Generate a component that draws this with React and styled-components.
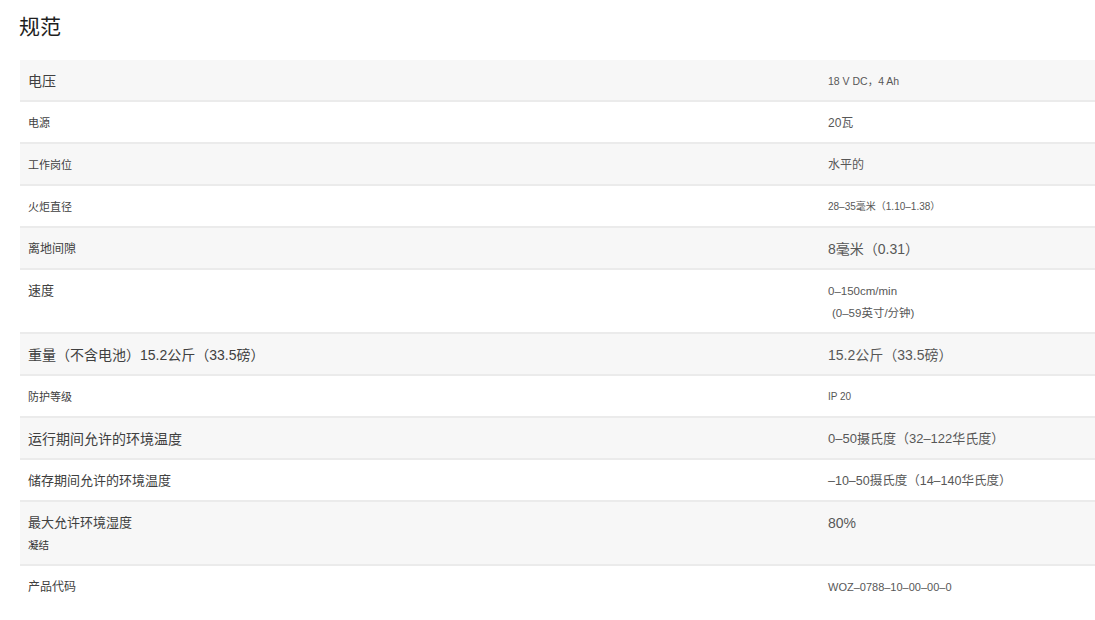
import React from "react";
import styled, { createGlobalStyle } from "styled-components";

const specs = [
  { label: "电压", labelSize: 14, values: ["18 V DC，4 Ah"], valueSize: 10.5 },
  { label: "电源", labelSize: 11, values: ["20瓦"], valueSize: 12 },
  { label: "工作岗位", labelSize: 11, values: ["水平的"], valueSize: 12 },
  { label: "火炬直径", labelSize: 11, values: ["28–35毫米（1.10–1.38）"], valueSize: 10 },
  { label: "离地间隙", labelSize: 12, values: ["8毫米（0.31）"], valueSize: 14 },
  {
    label: "速度",
    labelSize: 13,
    values: ["0–150cm/min", "(0–59英寸/分钟)"],
    valueSize: 11.5,
    tall: true,
  },
  {
    label: "重量（不含电池）15.2公斤（33.5磅）",
    labelSize: 14,
    values: ["15.2公斤（33.5磅）"],
    valueSize: 14,
  },
  { label: "防护等级", labelSize: 11, values: ["IP 20"], valueSize: 10 },
  {
    label: "运行期间允许的环境温度",
    labelSize: 14,
    values: ["0–50摄氏度（32–122华氏度）"],
    valueSize: 13,
  },
  {
    label: "储存期间允许的环境温度",
    labelSize: 13,
    values: ["–10–50摄氏度（14–140华氏度）"],
    valueSize: 12.5,
  },
  {
    label: "最大允许环境湿度",
    labelSize: 13,
    note: "凝结",
    values: ["80%"],
    valueSize: 14,
    tall: true,
  },
  { label: "产品代码", labelSize: 12, values: ["WOZ–0788–10–00–00–0"], valueSize: 11 },
];

const App = () => {
  return (
    <>
      <GlobalStyle />
      <Page>
        <Title>规范</Title>
        <Table>
          {specs.map((row, i) => (
            <Row key={row.label} $shaded={i % 2 === 0} $tall={row.tall}>
              <Label $size={row.labelSize}>
                <span>{row.label}</span>
                {row.note && <Note>{row.note}</Note>}
              </Label>
              <Value $size={row.valueSize}>
                {row.values.map((v, j) => (
                  <ValueLine key={v} $indent={j > 0}>
                    {v}
                  </ValueLine>
                ))}
              </Value>
            </Row>
          ))}
        </Table>
      </Page>
    </>
  );
};

export default App;

const GlobalStyle = createGlobalStyle`
  body {
    margin: 0;
    background: #ffffff;
    font-family: "Liberation Sans", "Noto Sans CJK SC", sans-serif;
  }
`;

const Page = styled.div`
  padding: 12px 0 0 20px;
  width: 1075px;
`;

const Title = styled.h2`
  margin: 0 0 0 -1px;
  height: 48px;
  font-size: 21px;
  font-weight: 400;
  line-height: 26px;
  color: #1f1f1f;
  font-family: "Noto Sans CJK SC", sans-serif;
`;

const Table = styled.div`
  display: flex;
  flex-direction: column;
`;

const Row = styled.div`
  display: grid;
  grid-template-columns: 808px 1fr;
  box-sizing: content-box;
  padding-top: 10px;
  height: ${(p) => (p.$tall ? 52 : 30)}px;
  background: ${(p) => (p.$shaded ? "#f7f7f7" : "#ffffff")};
  border-bottom: 2px solid #ebebeb;

  &:last-child {
    border-bottom: none;
  }
`;

const Label = styled.div`
  display: flex;
  flex-direction: column;
  padding-left: 8px;
  font-size: ${(p) => p.$size}px;
  line-height: 22px;
  color: #404040;
  white-space: nowrap;
`;

const Note = styled.span`
  font-size: 10.5px;
  color: #333;
`;

const Value = styled.div`
  display: flex;
  flex-direction: column;
  font-size: ${(p) => p.$size}px;
  line-height: 22px;
  color: #575757;
  white-space: nowrap;
`;

const ValueLine = styled.span`
  padding-left: ${(p) => (p.$indent ? 4 : 0)}px;
`;
